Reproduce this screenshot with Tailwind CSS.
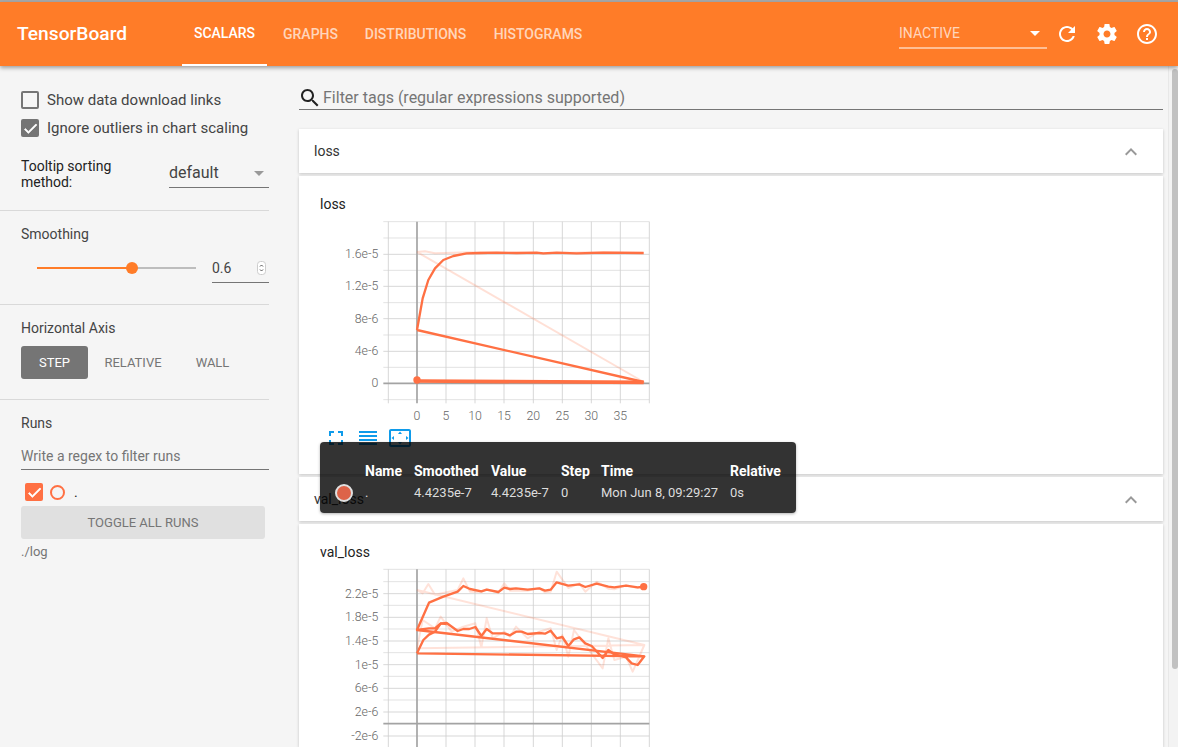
<!DOCTYPE html>
<html lang="en">
<head>
    <meta charset="UTF-8">
    <title>TensorBoard</title>
    <script src="https://cdn.jsdelivr.net/npm/@tailwindcss/browser@4"></script>
</head>
<body class="bg-[#f5f5f5] font-[Roboto,sans-serif] text-[#333] h-[747px] overflow-hidden relative">
    <div class="h-[2px] bg-[#a8a8a8]"></div>

    <!-- toolbar -->
    <header class="relative z-10 h-[64px] bg-[#ff7c28] flex items-stretch shadow-[0_2px_4px_rgba(0,0,0,0.35)]">
        <div class="w-[182px] pl-[17px] flex items-center text-white text-[19.200px] font-medium">TensorBoard</div>
        <nav class="flex text-[14px] font-medium text-white/70">
            <a class="w-[85px] flex items-center justify-center text-white border-b-2 border-white pt-[1px]">SCALARS</a>
            <a class="w-[87px] flex items-center justify-center">GRAPHS</a>
            <a class="w-[123px] flex items-center justify-center">DISTRIBUTIONS</a>
            <a class="w-[122px] flex items-center justify-center">HISTOGRAMS</a>
        </nav>
        <div class="ml-auto flex items-center pr-[19px]">
            <div class="w-[148px] h-[30px] mt-[-1px] pt-[2px] border-b-2 border-white/50 flex items-center justify-between text-white/70 text-[14px] pr-[7px]">
                <span>INACTIVE</span>
                <svg class="w-[10px] h-[5px] fill-white" viewBox="0 0 10 5"><path d="M0 0h10L5 5z"/></svg>
            </div>
            <svg class="w-[24px] h-[24px] ml-[8px] fill-white" viewBox="0 0 24 24"><path d="M17.65 6.35C16.2 4.9 14.21 4 12 4c-4.42 0-7.99 3.58-7.99 8s3.57 8 7.99 8c3.73 0 6.84-2.55 7.73-6h-2.08c-.82 2.33-3.04 4-5.65 4-3.31 0-6-2.69-6-6s2.69-6 6-6c1.66 0 3.14.69 4.22 1.78L13 11h7V4l-2.35 2.35z"/></svg>
            <svg class="w-[24px] h-[24px] ml-[16px] fill-white" viewBox="0 0 24 24"><path d="M19.43 12.98c.04-.32.07-.64.07-.98s-.03-.66-.07-.98l2.11-1.65c.19-.15.24-.42.12-.64l-2-3.46c-.12-.22-.39-.3-.61-.22l-2.49 1c-.52-.4-1.08-.73-1.69-.98l-.38-2.65C14.46 2.18 14.25 2 14 2h-4c-.25 0-.46.18-.49.42l-.38 2.65c-.61.25-1.17.59-1.69.98l-2.49-1c-.23-.09-.49 0-.61.22l-2 3.46c-.13.22-.07.49.12.64l2.11 1.65c-.04.32-.07.65-.07.98s.03.66.07.98l-2.11 1.65c-.19.15-.24.42-.12.64l2 3.46c.12.22.39.3.61.22l2.49-1c.52.4 1.08.73 1.69.98l.38 2.65c.03.24.24.42.49.42h4c.25 0 .46-.18.49-.42l.38-2.65c.61-.25 1.17-.59 1.69-.98l2.49 1c.23.09.49 0 .61-.22l2-3.46c.12-.22.07-.49-.12-.64l-2.11-1.65zM12 15.5c-1.93 0-3.5-1.57-3.5-3.5s1.57-3.5 3.5-3.5 3.5 1.57 3.5 3.5-1.57 3.5-3.5 3.5z"/></svg>
            <svg class="w-[24px] h-[24px] ml-[16px] fill-white" viewBox="0 0 24 24"><path d="M11 18h2v-2h-2v2zm1-16C6.48 2 2 6.48 2 12s4.48 10 10 10 10-4.48 10-10S17.52 2 12 2zm0 18c-4.41 0-8-3.59-8-8s3.59-8 8-8 8 3.59 8 8-3.59 8-8 8zm0-14c-2.21 0-4 1.79-4 4h2c0-1.1.9-2 2-2s2 .9 2 2c0 2-3 1.75-3 5h2c0-2.25 3-2.5 3-5 0-2.21-1.79-4-4-4z"/></svg>
        </div>
    </header>

    <div class="flex h-[681px]">
        <!-- sidebar -->
        <aside class="w-[269px] shrink-0 text-[14px]">
            <section class="h-[145px] border-b border-[#d9d9d9] pl-[21px] pt-[25px]">
                <label class="flex items-center h-[18px] gap-[8px] text-[#444] text-[15px]">
                    <span class="w-[18px] h-[18px] border-2 border-[#757575] rounded-[2px]"></span>
                    Show data download links
                </label>
                <label class="flex items-center h-[18px] gap-[8px] mt-[10px] text-[#444] text-[15px]">
                    <span class="w-[18px] h-[18px] bg-[#757575] rounded-[2px] flex items-center justify-center">
                        <svg class="w-[17px] h-[17px] fill-white stroke-white stroke-[1px]" viewBox="0 0 24 24"><path d="M9 16.17 4.83 12l-1.42 1.41L9 19 21 7l-1.41-1.41z"/></svg>
                    </span>
                    Ignore outliers in chart scaling
                </label>
                <div class="flex items-start mt-[21px]">
                    <div class="w-[148px] text-[#222] leading-[16px]">Tooltip sorting<br>method:</div>
                    <div class="w-[100px] h-[31px] mt-[-1px] border-b border-[#757575] flex items-center justify-between text-[16px] text-[#444] pt-[2px] pr-[5px]">
                        <span>default</span>
                        <svg class="w-[10px] h-[5px] fill-[#999]" viewBox="0 0 10 5"><path d="M0 0h10L5 5z"/></svg>
                    </div>
                </div>
            </section>

            <section class="h-[94px] border-b border-[#d9d9d9] pl-[21px] pt-[15px]">
                <div class="text-[#444] leading-[17px]">Smoothing</div>
                <div class="flex items-center mt-[9px]">
                    <div class="relative w-[159px] h-[2px] ml-[16px] bg-[#bdbdbd]">
                        <div class="h-full w-[95px] bg-[#ff7c28]"></div>
                        <div class="absolute left-[89px] top-[-5px] w-[12px] h-[12px] rounded-full bg-[#ff7c28]"></div>
                    </div>
                    <div class="ml-[16px] w-[57px] h-[29px] mt-[2px] border-b border-[#757575] flex items-center justify-between text-[#444] pr-[3px]">
                        <span>0.6</span>
                        <svg class="w-[9px] h-[14px]" viewBox="0 0 9 14"><rect x="0.5" y="0.5" width="8" height="13" rx="3" fill="#fff" stroke="#ccc"/><path d="M3 5.500 4.500 4 6 5.500M3 8.500 4.500 10 6 8.500" fill="none" stroke="#555"/></svg>
                    </div>
                </div>
            </section>

            <section class="h-[95px] border-b border-[#d9d9d9] pl-[21px] pt-[15px]">
                <div class="text-[#444] leading-[17px]">Horizontal Axis</div>
                <div class="flex mt-[9px] text-[13px] text-[#757575]">
                    <div class="w-[67px] h-[33px] flex items-center justify-center bg-[#757575] text-white rounded-[3px]">STEP</div>
                    <div class="w-[90px] flex items-center justify-center">RELATIVE</div>
                    <div class="w-[69px] flex items-center justify-center">WALL</div>
                </div>
            </section>

            <section class="pl-[21px] pt-[15px]">
                <div class="text-[#444] leading-[17px]">Runs</div>
                <div class="h-[29px] mt-[9px] pt-[3px] border-b border-[#757575] flex items-center text-[#757575]">Write a regex to filter runs</div>
                <div class="flex items-center h-[18px] mt-[13px] ml-[4px]">
                    <span class="w-[18px] h-[18px] bg-[#ff7043] rounded-[2px] flex items-center justify-center">
                        <svg class="w-[17px] h-[17px] fill-white stroke-white stroke-[1px]" viewBox="0 0 24 24"><path d="M9 16.17 4.83 12l-1.420 1.410L9 19 21 7l-1.410-1.410z"/></svg>
                    </span>
                    <span class="w-[15px] h-[15px] ml-[7px] rounded-full border-2 border-[#ff7043]"></span>
                    <span class="ml-[9px] text-[#222] leading-none">.</span>
                </div>
                <div class="w-[244px] h-[33px] mt-[5px] bg-[#e0e0e0] rounded-[3px] flex items-center justify-center text-[#757575] text-[13px]">TOGGLE ALL RUNS</div>
                <div class="mt-[3px] text-[13px] text-[#757575]">./log</div>
            </section>
        </aside>

        <!-- main -->
        <main class="w-[864px] ml-[30px] shrink-0">
            <div class="h-[27px] mt-[17px] pt-[3px] border-b border-[#757575] flex items-center gap-[1px] text-[16px] text-[#757575]">
                <svg class="w-[24px] h-[24px] fill-[#222] -ml-[1px] shrink-0" viewBox="0 0 24 24"><path d="M15.500 14h-.79l-.28-.27C15.410 12.590 16 11.110 16 9.500 16 5.910 13.090 3 9.500 3S3 5.910 3 9.500 5.910 16 9.500 16c1.610 0 3.090-.59 4.230-1.570l.27.28v.79l5 4.990L20.490 19l-4.990-5zm-6 0C7.010 14 5 11.990 5 9.500S7.010 5 9.500 5 14 7.010 14 9.500 11.990 14 9.500 14z"/></svg>
                Filter tags (regular expressions supported)
            </div>

            <div class="mt-[19px] h-[44px] pt-[1px] bg-white shadow-[0_1px_3px_rgba(0,0,0,0.2)] flex items-center justify-between pl-[15px] pr-[20px] text-[14px] text-[#333]">
                <span>loss</span>
                <svg class="w-[24px] h-[24px] fill-[#999]" viewBox="0 0 24 24"><path d="M12 8l-6 6 1.410 1.410L12 10.830l4.590 4.580L18 14z"/></svg>
            </div>
            <div class="mt-[3px] h-[298px] bg-white shadow-[0_1px_3px_rgba(0,0,0,0.2)]">
                <div class="h-[34px] pt-[20px] pl-[21px] text-[14px] leading-[17px] text-[#222]">loss</div>
                <svg class="block ml-[11px] font-[Roboto]" width="350" height="216" viewBox="0 0 1050 648">
                    <g stroke="#dcdcdc" stroke-width="2.500">
                        <path d="M220 35H1018M220 84H1018M220 181H1018M220 278H1018M220 375H1018M220 472H1018M220 569H1018"/>
                        <path stroke="#cfcfcf" d="M220 133H1018M220 229H1018M220 326H1018M220 424H1018"/>
                        <path stroke="#cfcfcf" d="M235 35V580M408 35V580M495 35V580M582 35V580M670 35V580M757 35V580M844 35V580M931 35V580M1018 35V580"/>
                    </g>
                    <path d="M220 520H1018M321 35V580" stroke="#a3a3a3" stroke-width="5" fill="none"/>
                    <g fill="none" stroke="#ff7043" stroke-linejoin="round">
                        <path opacity=".22" stroke-width="6" d="M321 126 345 124 375 130 480 127 700 130 880 126 1001 129M321 126 1001 516 321 514"/>
                        <path stroke-width="7" d="M321 360 338 265 355 210 375 175 400 150 430 138 470 130 510 129 560 128 620 129 680 128 700 130 740 128 800 130 880 128 1001 129M1001 516 321 360"/>
                        <path stroke-width="11" d="M321 513 1001 517"/>
                    </g>
                    <circle cx="321" cy="510" r="11" fill="#ff7043"/>
                    <g font-size="37" fill="#666" font-weight="300" text-anchor="end">
                        <text x="205" y="145">1.6e-5</text>
                        <text x="205" y="241">1.2e-5</text>
                        <text x="205" y="338">8e-6</text>
                        <text x="205" y="436">4e-6</text>
                        <text x="205" y="532">0</text>
                    </g>
                    <g font-size="37" fill="#666" font-weight="300" text-anchor="middle">
                        <text x="321" y="630">0</text>
                        <text x="408" y="630">5</text>
                        <text x="495" y="630">10</text>
                        <text x="582" y="630">15</text>
                        <text x="670" y="630">20</text>
                        <text x="757" y="630">25</text>
                        <text x="844" y="630">30</text>
                        <text x="931" y="630">35</text>
                    </g>
                </svg>
                <div class="flex gap-[8px] pl-[25px] fill-[#0f9bea]">
                    <svg class="w-[24px] h-[24px]" viewBox="0 0 24 24"><path d="M7 14H5v5h5v-2H7v-3zm-2-4h2V7h3V5H5v5zm12 7h-3v2h5v-5h-2v3zM14 5v2h3v3h2V5h-5z"/></svg>
                    <svg class="w-[24px] h-[24px]" viewBox="0 0 24 24"><path d="M3 15h18v-2H3v2zm0 4h18v-2H3v2zm0-8h18V9H3v2zm0-6v2h18V5H3z"/></svg>
                    <svg class="w-[24px] h-[24px]" viewBox="0 0 24 24"><path d="M12.010 5.500L10 8h4l-1.990-2.500zM18 10v4l2.500-1.990L18 10zM6 10l-2.500 2.010L6 14v-4zm8 6h-4l2.010 2.500L14 16zm7-13H3c-1.100 0-2 .9-2 2v14c0 1.100.9 2 2 2h18c1.100 0 2-.9 2-2V5c0-1.100-.9-2-2-2zm0 16.010H3V4.990h18v14.020z"/></svg>
                </div>
            </div>

            <div class="mt-[3px] h-[44px] pt-[1px] bg-white shadow-[0_1px_3px_rgba(0,0,0,0.2)] flex items-center justify-between pl-[15px] pr-[20px] text-[14px] text-[#333]">
                <span>val_loss</span>
                <svg class="w-[24px] h-[24px] fill-[#999]" viewBox="0 0 24 24"><path d="M12 8l-6 6 1.410 1.410L12 10.830l4.590 4.580L18 14z"/></svg>
            </div>
            <div class="mt-[3px] h-[223px] bg-white shadow-[0_1px_3px_rgba(0,0,0,0.2)]">
                <div class="h-[36px] pt-[20px] pl-[21px] text-[14px] leading-[17px] text-[#222]">val_loss</div>
                <svg class="block ml-[11px] font-[Roboto]" width="350" height="187" viewBox="0 0 1050 561">
                    <g stroke="#dcdcdc" stroke-width="2.500">
                        <path d="M220 28H1018M220 65H1018M220 136H1018M220 207H1018M220 278H1018M220 349H1018M220 420H1018"/>
                        <path stroke="#cfcfcf" d="M220 101H1018M220 172H1018M220 243H1018M220 314H1018M220 385H1018M220 456H1018M220 528H1018"/>
                        <path stroke="#cfcfcf" d="M235 28V561M408 28V561M495 28V561M582 28V561M670 28V561M757 28V561M844 28V561M931 28V561M1018 28V561"/>
                    </g>
                    <path d="M220 491H1018M321 28V561" stroke="#a3a3a3" stroke-width="5" fill="none"/>
                    <g fill="none" stroke="#ff7043" stroke-linejoin="round">
                        <path opacity=".2" stroke-width="6" d="M321 90 338 100 355 72 375 104 410 97 443 90 460 55 480 95 514 96 530 88 565 98 583 70 600 92 653 92 688 84 705 97 722 95 740 35 775 84 808 70 826 95 860 65 895 86 913 88 948 76 983 84 1003 82M321 90 1003 255 321 265 338 180 375 205 392 170 425 215 460 200 496 190 514 262 530 175 548 235 583 215 600 230 618 200 653 235 688 215 722 205 740 270 757 225 775 290 792 210 826 255 878 325 895 235 913 300 948 290 968 335 1003 255"/>
                        <path stroke-width="7" d="M321 210 357 128 400 110 443 95 460 78 480 87 514 94 530 89 565 96 583 83 600 87 618 85 653 89 688 85 705 92 722 89 740 67 775 77 808 73 826 81 860 71 895 80 913 82 948 77 983 82 1001 80"/>
                        <path stroke-width="7" d="M321 280 340 240 357 224 375 215 392 191 410 189 443 213 460 207 478 207 496 201 514 228 530 207 548 220 583 220 600 226 618 215 635 215 653 222 688 219 705 221 722 212 740 235 757 231 775 258 792 238 808 232 826 250 845 258 878 294 895 270 913 283 948 292 965 310 983 315 1003 289 321 280"/>
                        <path stroke-width="7" d="M1003 289 321 210 357 205 375 205 392 190 410 192"/>
                    </g>
                    <circle cx="1001" cy="80" r="11" fill="#ff7043"/>
                    <g font-size="37" fill="#666" font-weight="300" text-anchor="end">
                        <text x="205" y="113">2.2e-5</text>
                        <text x="205" y="184">1.8e-5</text>
                        <text x="205" y="255">1.4e-5</text>
                        <text x="205" y="326">1e-5</text>
                        <text x="205" y="397">6e-6</text>
                        <text x="205" y="468">2e-6</text>
                        <text x="205" y="540">-2e-6</text>
                    </g>
                </svg>
            </div>
        </main>
    </div>

    <!-- scrollbar -->
    <div class="absolute right-0 top-[66px] bottom-0 w-[10px] bg-[#f3f3f3] border-l border-[#e8e8e8]"></div>
    <div class="absolute right-0 top-[69px] w-[6px] h-[600px] bg-[#c1c1c1] rounded-[3px]"></div>

    <!-- chart tooltip -->
    <div class="absolute left-[320px] top-[442px] w-[476px] h-[71px] bg-black/80 rounded-[4px] shadow-[0_1px_3px_rgba(0,0,0,0.3)] pt-[21px] pl-[45px]">
        <div class="grid grid-cols-[49px_77px_70px_40px_129px_auto] text-white text-[14px] font-bold leading-[17px]">
            <span>Name</span><span>Smoothed</span><span>Value</span><span>Step</span><span>Time</span><span>Relative</span>
        </div>
        <div class="grid grid-cols-[49px_77px_70px_40px_129px_auto] text-[#ddd] text-[13px] leading-[15px] mt-[5px]">
            <span>.</span><span>4.4235e-7</span><span>4.4235e-7</span><span>0</span><span>Mon Jun 8, 09:29:27</span><span>0s</span>
        </div>
        <span class="absolute left-[15px] top-[42px] w-[18px] h-[18px] rounded-full bg-[#dd6349] border-2 border-[#e0e0e0]"></span>
    </div>
</body>
</html>
